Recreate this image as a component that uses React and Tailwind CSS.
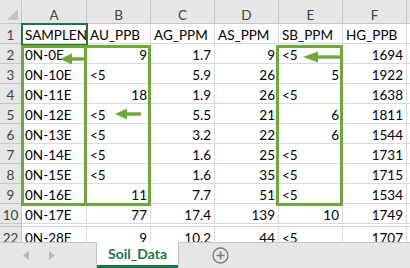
import React from "react";

const COLS = [
  { key: "A", w: "w-[65px]" },
  { key: "B", w: "w-[64px]" },
  { key: "C", w: "w-[64px]" },
  { key: "D", w: "w-[64px]" },
  { key: "E", w: "w-[64px]" },
  { key: "F", w: "w-[64px]" },
];

const ROWS = [
  ["1", ["SAMPLEN", "AU_PPB", "AG_PPM", "AS_PPM", "SB_PPM", "HG_PPB"]],
  ["2", ["0N-0E", "9", "1.7", "9", "<5", "1694"]],
  ["3", ["0N-10E", "<5", "5.9", "26", "5", "1922"]],
  ["4", ["0N-11E", "18", "1.9", "26", "<5", "1638"]],
  ["5", ["0N-12E", "<5", "5.5", "21", "6", "1811"]],
  ["6", ["0N-13E", "<5", "3.2", "22", "6", "1544"]],
  ["7", ["0N-14E", "<5", "1.6", "25", "<5", "1731"]],
  ["8", ["0N-15E", "<5", "1.6", "35", "<5", "1715"]],
  ["9", ["0N-16E", "11", "7.7", "51", "<5", "1534"]],
  ["10", ["0N-17E", "77", "17.4", "139", "10", "1749"]],
  ["22", ["0N-28E", "9", "10.2", "44", "<5", "1707"]],
];

const isNum = (s) => /^[\d.]+$/.test(s);

// green annotation arrow pointing left
const Arrow = ({ className, width, head = 12 }) => (
  <svg className={className} width={width} height="12" viewBox={`0 0 ${width} 12`}>
    <polygon points={`0,6 ${head},0.5 ${head},11.5`} fill="#6fa83a" />
    <rect x={head - 1} y="4.3" width={width - head + 1} height="3.4" fill="#6fa83a" />
  </svg>
);

const Row = ({ label, cells }) => (
  <div className="flex h-[20px]">
    <div className="w-[22px] shrink-0 flex items-center justify-center pt-[3px] bg-[#e6e6e6] border-r border-b border-[#c6c6c6] text-[#444]">
      {label}
    </div>
    {cells.map((v, i) => (
      <div
        key={i}
        className={`${COLS[i].w} shrink-0 flex items-center pt-[3px] px-[3px] border-r border-b border-[#d9d9d9] whitespace-nowrap overflow-hidden leading-[16px] ${
          isNum(v) ? "justify-end" : "justify-start"
        }`}
      >
        {v}
      </div>
    ))}
    <div className="flex-1 border-b border-[#d9d9d9]" />
  </div>
);

const App = () => {
  return (
    <div className="relative w-[410px] h-[268px] overflow-hidden bg-white font-['Lato','Liberation_Sans',sans-serif] text-[13.5px] text-black">
      {/* sheet grid */}
      <div className="h-[242px] overflow-hidden">
        {/* column headers */}
        <div className="flex h-[24px]">
          <div className="relative w-[22px] shrink-0 bg-[#e6e6e6] border-r border-b border-[#c6c6c6]">
            <svg className="absolute right-[3px] bottom-[3px]" width="11" height="11" viewBox="0 0 11 11">
              <polygon points="11,0 11,11 0,11" fill="#c4c4c4" />
            </svg>
          </div>
          {COLS.map((c) => (
            <div
              key={c.key}
              className={`${c.w} shrink-0 flex items-center justify-center pt-[7px] bg-[#e6e6e6] border-r border-b border-[#c6c6c6] text-[#444] leading-[16px]`}
            >
              {c.key}
            </div>
          ))}
          <div className="flex-1 bg-[#e6e6e6] border-b border-[#c6c6c6]" />
        </div>

        {/* data rows */}
        {ROWS.slice(0, 10).map(([label, cells]) => (
          <Row key={label} label={label} cells={cells} />
        ))}
        {/* hidden rows marker */}
        <div className="flex h-[3px]">
          <div className="w-[22px] shrink-0 bg-[#e6e6e6] border-r border-b border-[#c6c6c6]" />
          <div className="flex-1 border-b border-[#d9d9d9]" />
        </div>
        {ROWS.slice(10).map(([label, cells]) => (
          <Row key={label} label={label} cells={cells} />
        ))}
      </div>

      {/* sheet tabs */}
      <div className="flex h-[26px] bg-[#e6e6e6]">
        <div className="w-[97px] flex items-center gap-[20px] pl-[23px] border-t border-r border-[#c6c6c6]">
          <svg width="6" height="9" viewBox="0 0 6 9">
            <polygon points="6,0 6,9 0,4.5" fill="#b8b8b8" />
          </svg>
          <svg width="6" height="9" viewBox="0 0 6 9">
            <polygon points="0,0 0,9 6,4.5" fill="#b8b8b8" />
          </svg>
        </div>
        <div className="w-[81px] flex items-center justify-center bg-white border-b-[3px] border-[#217346] font-bold text-[#217346] text-[14px]">
          Soil_Data
        </div>
        <div className="flex-1 flex items-center pl-[33px] border-t border-l border-[#c6c6c6]">
          <svg width="17" height="17" viewBox="0 0 17 17">
            <circle cx="8.5" cy="8.5" r="7.5" fill="none" stroke="#7b7b7b" strokeWidth="1.3" />
            <path d="M8.5 4.5v8M4.5 8.5h8" stroke="#7b7b7b" strokeWidth="1.6" />
          </svg>
        </div>
      </div>

      {/* active cell A1 */}
      <div className="absolute left-[21px] top-[23px] w-[67px] h-[23px] border-2 border-[#217346]" />

      {/* annotation boxes */}
      <div className="absolute left-[21px] top-[45px] w-[66px] h-[161px] border-[3px] border-[#6fa83a]" />
      <div className="absolute left-[84px] top-[45px] w-[67px] h-[161px] border-[3px] border-[#6fa83a]" />
      <div className="absolute left-[276px] top-[45px] w-[67px] h-[161px] border-[3px] border-[#6fa83a]" />

      {/* annotation arrows */}
      <Arrow className="absolute left-[60px] top-[53px]" width={25} />
      <Arrow className="absolute left-[115px] top-[108px]" width={26} />
      <Arrow className="absolute left-[303px] top-[51px]" width={38} head={15} />
    </div>
  );
};

export default App;
